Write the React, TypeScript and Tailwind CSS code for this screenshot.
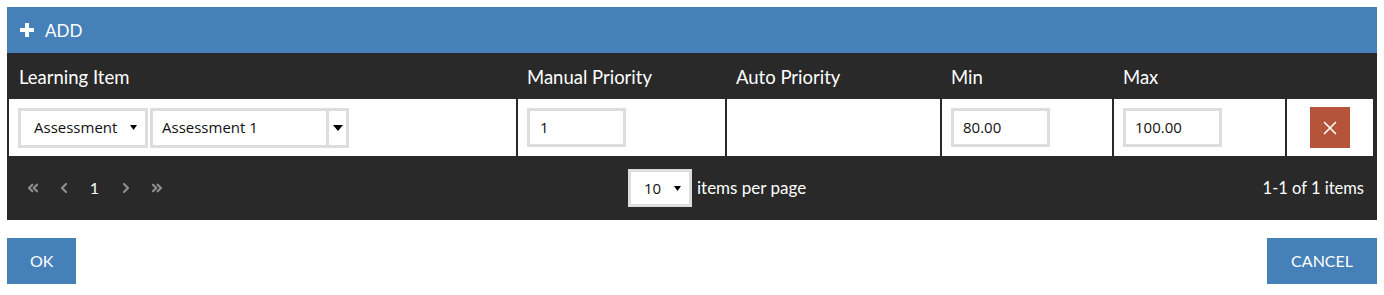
import React from "react";
import { ChevronsLeft, ChevronLeft, ChevronRight, ChevronsRight, X } from "lucide-react";

const lato = { fontFamily: "Lato, 'Open Sans', sans-serif" };

function Caret({ className = "" }: { className?: string }) {
  return (
    <svg width="7" height="5" viewBox="0 0 7 5" className={className}>
      <path d="M0 0 H7 L3.5 5 Z" fill="#000" />
    </svg>
  );
}

export default function App() {
  return (
    <div className="p-[7px] bg-white font-['Lato',sans-serif]">
      {/* toolbar */}
      <div className="h-[46px] bg-[#4680b8] flex items-center pl-[12px] text-white">
        <svg width="16" height="16" viewBox="0 0 16 16" className="mr-[10px]">
          <path d="M6 1 H10 V6 H15 V10 H10 V15 H6 V10 H1 V6 H6 Z" fill="#fff" />
        </svg>
        <span className="text-[17px] leading-none">ADD</span>
      </div>
      {/* header */}
      <div className="h-[46px] bg-[#292929] flex px-[2px] gap-[2px] text-white text-[18.5px]">
        <div className="w-[507px] flex items-center pl-[10px] pt-[4px]">Learning Item</div>
        <div className="w-[207px] flex items-center pl-[9px] pt-[4px]">Manual Priority</div>
        <div className="w-[213px] flex items-center pl-[9px] pt-[4px]">Auto Priority</div>
        <div className="w-[170px] flex items-center pl-[9px] pt-[4px]">Min</div>
        <div className="w-[171px] flex items-center pl-[9px] pt-[4px]">Max</div>
        <div className="w-[86px]"></div>
      </div>
      {/* row */}
      <div className="h-[57px] bg-[#292929] flex px-[2px] gap-[2px] font-['Open_Sans',sans-serif] text-[15px] text-[#111]">
        <div className="w-[507px] bg-white flex items-center pl-[9px]">
          <div className="w-[130px] h-[40px] border-[3px] border-[#dddddd] bg-white flex items-center pl-[13px] pr-[8px]">
            <span className="flex-1">Assessment</span>
            <Caret />
          </div>
          <div className="w-[199px] h-[40px] border-[3px] border-[#dddddd] bg-white flex items-center ml-[2px]">
            <span className="flex-1 pl-[9px]">Assessment 1</span>
            <div className="w-[20px] h-full border-l-[3px] border-[#dddddd] flex items-center justify-center">
              <svg width="10" height="6" viewBox="0 0 10 6">
                <path d="M0 0 H10 L5 6 Z" fill="#000" />
              </svg>
            </div>
          </div>
        </div>
        <div className="w-[207px] bg-white flex items-center pl-[9px]">
          <div className="w-[99px] h-[39px] border-[3px] border-[#dddddd] flex items-center pl-[10px]">1</div>
        </div>
        <div className="w-[213px] bg-white"></div>
        <div className="w-[170px] bg-white flex items-center pl-[9px]">
          <div className="w-[99px] h-[39px] border-[3px] border-[#dddddd] flex items-center pl-[9px]">80.00</div>
        </div>
        <div className="w-[171px] bg-white flex items-center pl-[9px]">
          <div className="w-[99px] h-[39px] border-[3px] border-[#dddddd] flex items-center pl-[9px]">100.00</div>
        </div>
        <div className="w-[86px] bg-white flex items-center pl-[23px]">
          <div className="w-[40px] h-[41px] bg-[#b5543a] flex items-center justify-center">
            <X size={22} color="#fff" strokeWidth={1.8} />
          </div>
        </div>
      </div>
      {/* pager */}
      <div className="h-[64px] bg-[#292929] flex items-center text-white text-[17px]" style={lato}>
        <div className="w-[621px] flex items-center pl-[10px]">
          <div className="w-[31px] flex justify-center"><ChevronsLeft size={16} color="#8f8f8f" strokeWidth={3.2} /></div>
          <div className="w-[31px] flex justify-center"><ChevronLeft size={16} color="#8f8f8f" strokeWidth={3.2} /></div>
          <div className="w-[31px] flex justify-center text-[16px]">1</div>
          <div className="w-[31px] flex justify-center"><ChevronRight size={16} color="#8f8f8f" strokeWidth={3.2} /></div>
          <div className="w-[31px] flex justify-center"><ChevronsRight size={16} color="#8f8f8f" strokeWidth={3.2} /></div>
        </div>
        <div className="w-[64px] h-[38px] border-[3px] border-[#dddddd] bg-white flex items-center text-[#111] text-[15px] pl-[13px] pr-[8px] font-['Open_Sans',sans-serif]">
          <span className="flex-1">10</span>
          <Caret />
        </div>
        <span className="ml-[5px]">items per page</span>
        <span className="ml-auto pr-[13px] text-[16.5px]">1-1 of 1 items</span>
      </div>
      {/* buttons */}
      <div className="flex justify-between mt-[18px]">
        <button className="h-[46px] px-[23px] bg-[#4680b8] text-white text-[16px]" style={lato}>OK</button>
        <button className="h-[46px] px-[24px] bg-[#4680b8] text-white text-[16px]" style={lato}>CANCEL</button>
      </div>
    </div>
  );
}
